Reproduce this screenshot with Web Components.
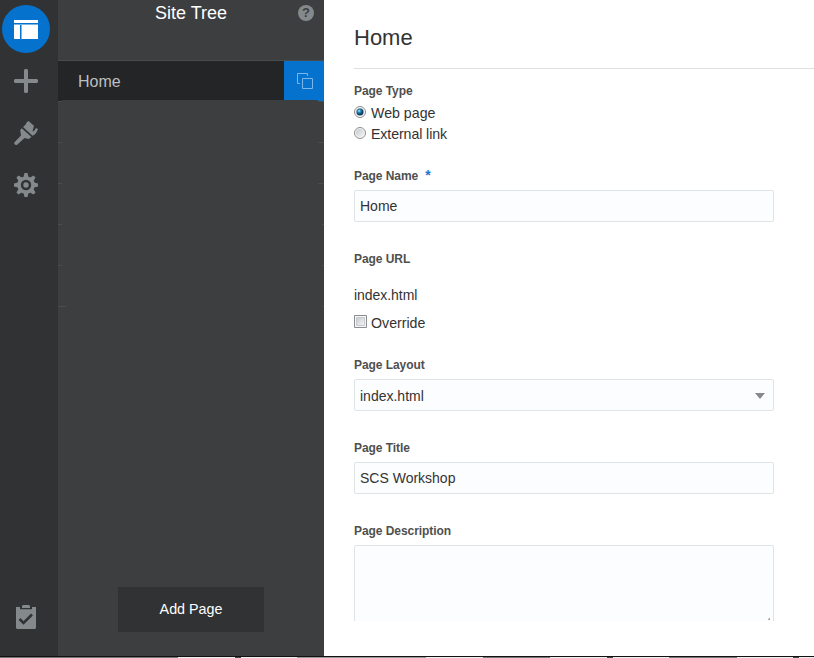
<!DOCTYPE html>
<html lang="en">
<head>
<meta charset="utf-8">
<title>Site Tree</title>
<style>
html, body { margin: 0; height: 100%; overflow: hidden; background: #fff; font-family: "Liberation Sans", Arial, sans-serif; }
</style>
</head>
<body>
<site-builder></site-builder>
<script>
const define = (name, html) => {
  const template = document.createElement('template');
  template.innerHTML = html;
  customElements.define(name, class extends HTMLElement {
    constructor() {
      super();
      this.attachShadow({ mode: 'open' }).append(template.content.cloneNode(true));
    }
  });
};

define('nav-rail', `
<style>
:host { display: flex; flex-direction: column; width: 58px; height: 656px; background: #313234; box-sizing: border-box; padding: 5px 0 27px 2px; }
.item { width: 48px; height: 48px; margin-bottom: 4px; display: grid; place-items: center; color: #84898c; }
.active { background: #0572ce; border-radius: 50%; color: #fff; }
.last { margin: auto 0 0; height: 24px; }
svg { display: block; }
</style>
<div class="item active"><svg width="24" height="24" fill="currentColor"><path d="M0 3h24v3H0z"/><path fill="#79b5e7" d="M0 7h24v1H0z"/><path d="M0 8h6v14H0zM8 8h16v14H8z"/><path fill="#79b5e7" d="M7 8h1v14H7z"/></svg></div>
<div class="item"><svg width="24" height="24" fill="currentColor"><path d="M11 0h2l1 1v9h9l1 1v2l-1 1h-9v9l-1 1h-2l-1-1v-9H1l-1-1v-2l1-1h9V1z"/></svg></div>
<div class="item"><svg width="24" height="24" fill="currentColor"><path d="M9 6Q12 3.500 13 1L14.500 0 20 4.700 18.500 10.500Q20 10.500 22 7L24 8Q22.500 13 18.500 14.700z"/><path d="M7.700 7.200 17.500 16 14.600 18 10.500 17 3.200 23.700Q1 24.500.2 22.800 0 21.500 1 20.800L7 14.400 6.200 9z"/></svg></div>
<div class="item"><svg width="24" height="24"><g fill="currentColor"><circle cx="12" cy="12" r="8.800"/><path id="t" d="M10.500 0h3l1.200 5v14l-1.200 5h-3l-1.200-5V5z"/><path transform="rotate(45 12 12)" d="M10.500 0h3l1.200 5v14l-1.200 5h-3l-1.200-5V5z"/><path transform="rotate(90 12 12)" d="M10.500 0h3l1.200 5v14l-1.200 5h-3l-1.200-5V5z"/><path transform="rotate(135 12 12)" d="M10.500 0h3l1.200 5v14l-1.200 5h-3l-1.200-5V5z"/></g><circle cx="12" cy="12" r="5.200" fill="#313234"/><circle cx="12" cy="12" r="2.700" fill="currentColor"/></svg></div>
<div class="item last"><svg width="24" height="24" fill="currentColor"><path d="M2 2h4v2.200h12V2h4v21l-1 1H3l-1-1z"/><path d="M9 0h6l1 1v2H8V1z"/><path d="M5.500 14 9.500 18 18 9.500" fill="none" stroke="#313234" stroke-width="2.500"/></svg></div>`);

define('help-badge', `
<style>
:host { display: grid; place-items: center; width: 16px; height: 16px; border-radius: 50%; background: #84898c; color: #3d3e40; font: bold 13px/16px "Liberation Sans", sans-serif; }
</style><span>?</span>`);

define('tree-row', `
<style>
:host { display: flex; height: 39px; border-top: 1px solid #4a4b4d; background: #242526; color: #bcbfc1; font-size: 16px; line-height: 42px; }
.name { flex: 1; height: 39px; padding-left: 20px; }
.action { width: 40px; height: 39px; background: #0572ce; display: grid; place-items: center; }
svg { display: block; margin: 1px 0 0 2px; }
</style>
<div class="name"><slot></slot></div>
<div class="action"><svg width="16" height="16" fill="none" stroke="#7bb7eb"><path d="M3 10.500H.5V.5h10V3"/><path d="M5.500 5.500h10v10h-10z"/></svg></div>`);

define('site-tree', `
<style>
:host { display: flex; flex-direction: column; width: 266px; height: 656px; background: #3d3e40; }
header { display: grid; grid-template-columns: 26px 1fr 26px; height: 60px; color: #fff; font-size: 18px; line-height: 26px; text-align: center; }
help-badge { margin: 5px 0 0; }
.guides { flex: 1; display: flex; flex-direction: column; }
.guide { height: 40px; display: flex; justify-content: space-between; }
.guide::before, .guide::after { content: ""; width: 4px; height: 1px; background: #4a4b4d; }
.guide::after { width: 6px; }
.guide + .guide { margin-top: 1px; }
.guide.short::after { width: 2px; }
.guide.long::before { width: 8px; }
.edge { height: 1px; display: flex; justify-content: space-between; }
.edge::before { content: ""; width: 4px; background: #242526; }
.edge::after { content: ""; width: 6px; background: #0572ce; }
button { width: 146px; height: 45px; margin: 0 auto 24px 60px; padding: 0 0 1px; border: 0; background: #313234; color: #fff; font: 14.300px "Liberation Sans", sans-serif; }
</style>
<header><i></i><span>Site Tree</span><help-badge></help-badge></header>
<tree-row>Home</tree-row>
<div class="guides"><div class="edge"></div>
<div class="guide"></div><div class="guide"></div><div class="guide"></div><div class="guide short"></div><div class="guide short"></div><div class="guide short long"></div></div>
<button><span>Add Page</span></button>`);

define('field-label', `
<style>
:host { display: flex; height: 14px; margin-bottom: 7px; font-size: 12px; font-weight: bold; line-height: 14px; letter-spacing: -.06px; color: #4f4f4f; }
i { display: none; }
:host([required]) i { display: block; margin: -1px 0 0 7px; font: bold 14px/14px "Liberation Sans", sans-serif; color: #1f73d0; }
</style><slot></slot><i>*</i>`);

define('text-box', `
<style>
:host { display: flex; align-items: center; justify-content: space-between; box-sizing: border-box; width: 420px; height: 32px; margin-bottom: 30px; padding: 0 8px 0 5px; border: 1px solid #dfe4e7; border-radius: 2px; background: #fcfdfe; color: #333; font-size: 14px; }
svg { display: none; }
:host([dropdown]) svg { display: block; margin-top: 2px; }
:host([dropdown]) span { padding-top: 2px; }
:host([multiline]) { height: 76px; border-bottom: 0; border-radius: 2px 2px 0 0; margin: 0; align-items: flex-end; justify-content: flex-end; padding: 0 3px 1px 0; }
.grip { display: none; width: 2px; height: 2px; background: linear-gradient(135deg, #ddd 50%, #aaa 50%); }
:host([multiline]) .grip { display: block; }
</style><span><slot></slot></span><svg width="10" height="6"><path d="M0 0h10L5 6z" fill="#84898c"/></svg><b class="grip"></b>`);

define('choice-row', `
<style>
:host { display: flex; height: 20px; margin-bottom: 1px; font-size: 14.200px; line-height: 20px; color: #333; }
svg { display: block; width: 13px; height: 13px; margin: 3px 4px 0 0; }
.box, .dot { display: none; }
:host([type="checkbox"]) .box, :host([checked]) .dot { display: block; }
:host([type="checkbox"]) .round { display: none; }
:host([type="checkbox"]) svg { margin-top: 2px; }
</style>
<svg viewBox="0 0 13 13"><defs><linearGradient id="g" x2="1" y2="1"><stop stop-color="#c4c8ce"/><stop offset="1" stop-color="#f6f6f6"/></linearGradient><radialGradient id="b" cx=".38" cy=".35"><stop stop-color="#b5ecff"/><stop offset=".45" stop-color="#238bbb"/><stop offset="1" stop-color="#123f60"/></radialGradient></defs>
<g class="round"><circle cx="6" cy="6" r="5.500" fill="#fafafa" stroke="#8b8d8f"/><circle cx="6" cy="6" r="4.200" fill="url(#g)"/></g><circle class="dot" cx="6" cy="6" r="3.500" fill="url(#b)"/>
<g class="box"><path d="M.5.5h12v12H.5z" fill="#f6f6f6" stroke="#8b8d8f"/><path d="M2.500 2.500h8v8h-8z" fill="url(#g)" stroke="#c8cbce"/></g></svg><slot></slot>`);

define('page-settings', `
<style>
:host { display: block; flex: 1; height: 656px; box-sizing: border-box; padding: 23px 0 0 30px; background: #fff; overflow: hidden; }
h1 { margin: 0 0 15px; height: 45px; border-bottom: 1px solid #dfdfdf; font-size: 22px; line-height: 30px; font-weight: normal; color: #333; }
.url { height: 20px; margin: 19px 0 8px; font-size: 14px; line-height: 20px; letter-spacing: -.05px; color: #333; }
.types { margin: -2px 0 25px; }
.types choice-row + choice-row { letter-spacing: -.1px; }
.override { margin-bottom: 25px; }
</style>
<h1>Home</h1>
<field-label>Page Type</field-label>
<div class="types"><choice-row checked>Web page</choice-row><choice-row>External link</choice-row></div>
<field-label required>Page Name</field-label><text-box>Home</text-box>
<field-label>Page URL</field-label>
<div class="url">index.html</div>
<choice-row class="override" type="checkbox">Override</choice-row>
<field-label>Page Layout</field-label><text-box dropdown>index.html</text-box>
<field-label>Page Title</field-label><text-box>SCS Workshop</text-box>
<field-label>Page Description</field-label><text-box multiline></text-box>`);

define('site-builder', `
<style>
:host { display: block; width: 814px; height: 658px; }
main { display: flex; height: 656px; }
.line { height: 1px; background: #111; }
.strip { height: 1px; background: linear-gradient(90deg, #777 0 178px, #eee 178px 235px, #444 235px 241px, #eee 241px 297px, #999 297px 426px, #eee 426px 483px, #777 483px 550px, #eee 550px 607px, #444 607px 613px, #eee 613px 669px, #777 669px 737px, #eee 737px 793px, #444 793px 799px, #eee 799px); }
</style>
<main><nav-rail></nav-rail><site-tree></site-tree><page-settings></page-settings></main>
<div class="line"></div><div class="strip"></div>`);
</script>
</body>
</html>
